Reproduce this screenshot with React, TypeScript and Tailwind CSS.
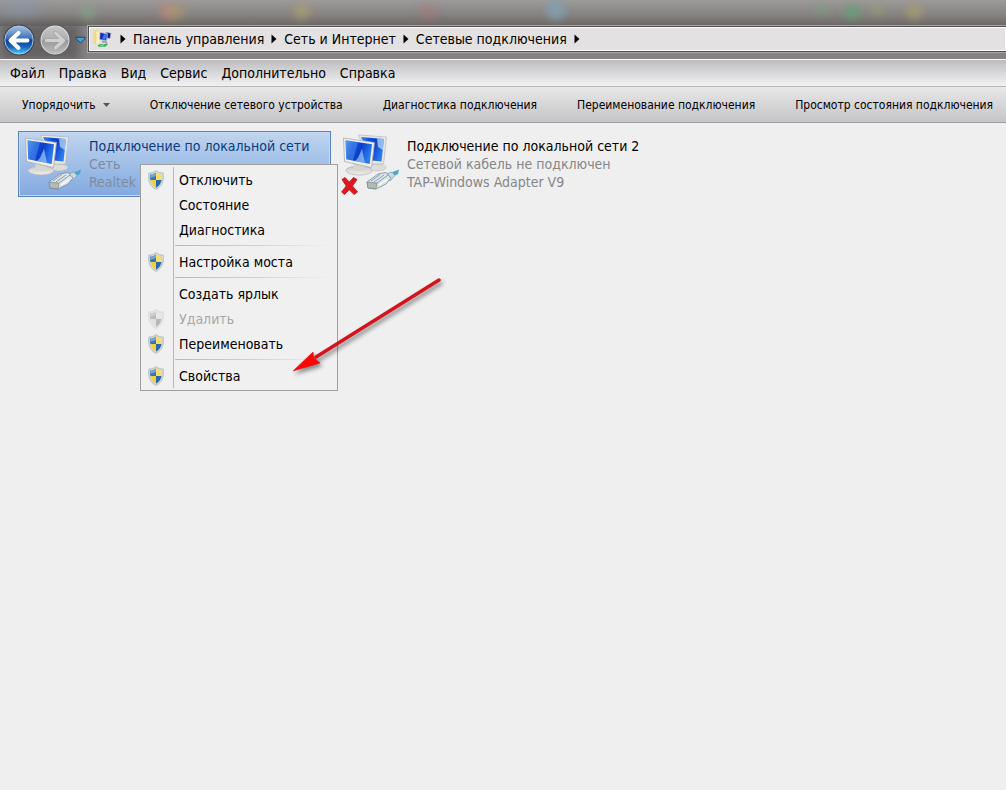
import React from 'react';

const BREADCRUMBS = ['Панель управления', 'Сеть и Интернет', 'Сетевые подключения'];

const MENU_BAR = ['Файл', 'Правка', 'Вид', 'Сервис', 'Дополнительно', 'Справка'];

const COMMANDS = [
  'Отключение сетевого устройства',
  'Диагностика подключения',
  'Переименование подключения',
  'Просмотр состояния подключения',
];

type MenuEntry = { label: string; shield?: boolean; disabled?: boolean };

const CONTEXT_GROUPS: MenuEntry[][] = [
  [{ label: 'Отключить', shield: true }, { label: 'Состояние' }, { label: 'Диагностика' }],
  [{ label: 'Настройка моста', shield: true }],
  [
    { label: 'Создать ярлык' },
    { label: 'Удалить', shield: true, disabled: true },
    { label: 'Переименовать', shield: true },
  ],
  [{ label: 'Свойства', shield: true }],
];

const BackIcon = () => (
  <svg width="32" height="32" viewBox="0 0 34 34" aria-hidden="true">
    <defs>
      <linearGradient id="back" x1="0" y1="0" x2="0" y2="1">
        <stop offset="0" stopColor="#a9c4e6" />
        <stop offset="0.45" stopColor="#3b6db8" />
        <stop offset="0.5" stopColor="#0c3f94" />
        <stop offset="0.75" stopColor="#1668bd" />
        <stop offset="1" stopColor="#4fd0fa" />
      </linearGradient>
    </defs>
    <circle cx="17" cy="17" r="16.5" fill="#3c4656" />
    <circle cx="17" cy="17" r="15" fill="url(#back)" stroke="#b4c8e2" strokeWidth="1" />
    <path
      d="M8 17.5 L16.5 9.5 M8 17.5 L16.5 25.5 M8.5 17.5 H26"
      stroke="#fff"
      strokeWidth="4.2"
      strokeLinejoin="round"
      strokeLinecap="round"
      fill="none"
    />
  </svg>
);

const ForwardIcon = () => (
  <svg width="32" height="32" viewBox="0 0 34 34" aria-hidden="true">
    <defs>
      <linearGradient id="forward" x1="0" y1="0" x2="0" y2="1">
        <stop offset="0" stopColor="#c6c6c6" />
        <stop offset="0.48" stopColor="#b0b0b0" />
        <stop offset="0.52" stopColor="#999999" />
        <stop offset="1" stopColor="#bdbdbd" />
      </linearGradient>
    </defs>
    <circle cx="17" cy="17" r="16.5" fill="#5c5c5c" />
    <circle cx="17" cy="17" r="14.8" fill="url(#forward)" stroke="#d9d9d9" strokeWidth="1.2" />
    <path d="M26 17.5 L17.5 9.5 M26 17.5 L17.5 25.5 M25.5 17.5 H8" stroke="#a0a0a0" strokeWidth="5" strokeLinecap="round" fill="none" />
    <path d="M26 17.5 L17.5 9.5 M26 17.5 L17.5 25.5 M25.5 17.5 H8" stroke="#d0d0d0" strokeWidth="3.4" strokeLinecap="round" fill="none" />
  </svg>
);

const FolderIcon = () => (
  <svg width="20" height="20" viewBox="0 0 20 20" aria-hidden="true" className="shrink-0">
    <path d="M0.5 1.5 L5 0.5 L6 2 V14 L3 15.5 L0.5 14.5 Z" fill="#eed98a" />
    <path d="M3.5 3 L6 2 V14 L3.5 15.5 Z" fill="#fbf3c4" />
    <path d="M7 3.2 L14.5 5 L13.5 12 L6.5 10.5 Z" fill="#1b2bb4" stroke="#c3cede" strokeWidth="0.8" />
    <path d="M11 5 L14 5.6 L12 11 L9 10.5 Z" fill="#3b78ec" />
    <path d="M12.5 3 L18 4.2 L17 9.5 L14 9 L14.5 5 Z" fill="#171f7a" stroke="#aebace" strokeWidth="0.6" />
    <path d="M9 12 L14 12.5 L13.5 14 L9 13.5 Z" fill="#8b94a4" />
    <path d="M4.5 16.5 L7 15 H12 L14.5 14 V16 L12 17.8 H5.5 Z" fill="#3fb05c" />
    <path d="M6.5 16.2 L11 15.6 L10 17 Z" fill="#a9ebb8" />
  </svg>
);

const ShieldIcon = ({ disabled }: { disabled?: boolean }) => (
  <svg width="16" height="20" viewBox="0 0 16 20" aria-hidden="true" className={disabled ? 'opacity-40 grayscale' : ''}>
    <path d="M8 0.5 C6 2.2 3.6 3 0.8 3 C-0.2 10.5 1.8 16.4 8 19.5 C14.2 16.4 16.2 10.5 15.2 3 C12.4 3 10 2.2 8 0.5 Z" fill="#d3d8dd" stroke="#a3abb3" strokeWidth="0.6" />
    <path d="M8 2.4 C6.3 3.7 4.4 4.4 2 4.5 C1.8 6.5 1.9 8.3 2.4 10 H8 Z" fill="#3577b3" />
    <path d="M8 2.4 C9.7 3.7 11.6 4.4 14 4.5 C14.2 6.5 14.1 8.3 13.6 10 H8 Z" fill="#f7de6a" />
    <path d="M2.4 10 H8 V17.8 C4.9 16 3.1 13.3 2.4 10 Z" fill="#f2cd45" />
    <path d="M13.6 10 H8 V17.8 C11.1 16 12.9 13.3 13.6 10 Z" fill="#2a69a8" />
    <path d="M2.4 4.8 C4.8 4.6 6.4 4 8 2.8 V5.5 C6 7 4.4 7.6 2.1 7.6 Z" fill="#fff" opacity="0.35" />
  </svg>
);

const NetworkIcon = ({ id, offline }: { id: string; offline?: boolean }) => (
  <svg width="60" height="64" viewBox="0 0 60 64" aria-hidden="true" className="shrink-0">
    <defs>
      <linearGradient id={id} x1="0" y1="0" x2="1" y2="0.4">
        <stop offset="0" stopColor="#3a8bf0" />
        <stop offset="0.35" stopColor="#0f4fd8" />
        <stop offset="0.6" stopColor="#0a3fca" />
        <stop offset="1" stopColor="#2b7bee" />
      </linearGradient>
      <linearGradient id={`${id}-stand`} x1="0" y1="0" x2="0" y2="1">
        <stop offset="0" stopColor="#c9c9c7" />
        <stop offset="1" stopColor="#efeeec" />
      </linearGradient>
    </defs>
    {/* rear monitor */}
    <ellipse cx="35" cy="35.5" rx="10" ry="3.5" fill="#dcdcda" stroke="#b9bcbf" strokeWidth="0.6" />
    <path d="M17.5 3 L45.5 5 L42.5 32 L30 32 Z" fill="#e9e8e3" stroke="#b4b6b8" strokeWidth="0.7" />
    <path d="M20 5 L43 7 L40.5 29.5 L31 28.5 Z" fill={`url(#${id})`} />
    <path d="M36 6.4 L43 7 L41.8 18 L37 15 Z" fill="#b6d5fa" opacity="0.75" />
    {/* front monitor */}
    <ellipse cx="18" cy="38.5" rx="13" ry="4.5" fill={`url(#${id}-stand)`} stroke="#b0b3b6" strokeWidth="0.7" />
    <path d="M12 30 L23 31.5 L24 39 L13 38.5 Z" fill="#d6d5d1" />
    <path d="M2.5 6 L33.5 10.5 L30.5 35.5 L3.5 29.5 Z" fill="#f1efe8" stroke="#aaadb0" strokeWidth="0.8" />
    <path d="M4.5 8.3 L31 12.2 L28.7 32 L5.3 27.2 Z" fill={`url(#${id})`} />
    <path d="M4.5 8.3 L17 10.2 L12 28.6 L5.3 27.2 Z" fill="#7ab6f8" opacity="0.35" />
    <path d="M17 26 L21 17 L24 31 L14 29 Z" fill="#a9cffb" opacity="0.65" />
    {/* cable plug */}
    <path d="M49 41 L58 37.5 L57 42 L51 45 Z" fill="#4aa7cf" />
    <path d="M45 42 L51 40 L54 43.5 L49 49 Z" fill="#c5dbe7" stroke="#7d97a6" strokeWidth="0.7" />
    <path d="M26 50 L37 42 L45 40.5 L50 46 L45 52 L35 57 L27 56 Z" fill="#dde5ea" stroke="#7b8b96" strokeWidth="0.8" />
    <path d="M26 50 L36 51 L35 57 L27 56 Z" fill="#a9b6bf" stroke="#71828e" strokeWidth="0.6" />
    <path d="M36 51 L47 43 M30 49 L39 42.5 M33 50 L43 43" stroke="#738d9d" strokeWidth="0.8" fill="none" />
    <path d="M28 54.5 L29 51.5 M30.5 55 L31.5 52 M33 55.5 L34 52.5" stroke="#d6c878" strokeWidth="1" />
    <path d="M38 53 L46 47.5" stroke="#fff" strokeWidth="1.5" />
    {offline && (
      <path
        d="M1 47.5 L4 45.5 L8.3 50 L12.5 45.5 L16 47.5 L11.5 54 L16.5 60 L13 62.5 L8.3 57.8 L3.5 62.5 L0.6 60 L5.2 54 Z"
        fill="#dc1920"
        stroke="#b3161c"
        strokeWidth="0.8"
        strokeLinejoin="round"
      />
    )}
  </svg>
);

const Chevron = () => (
  <svg width="6" height="10" viewBox="0 0 6 10" aria-hidden="true" className="shrink-0">
    <path d="M0.5 0.5 L5.5 5 L0.5 9.5 Z" fill="#000" />
  </svg>
);

const TitleBar = () => (
  <header className="relative overflow-hidden h-[59px] pt-6 bg-[#858383]">
    {/* colours of the desktop showing through the glass */}
    <div className="absolute inset-x-0 top-0 h-[26px] bg-linear-to-b from-[#9d9a9a] via-[#898685] to-[#6b6664]">
      <div className="absolute left-0 top-0 w-10 h-4 rounded-full bg-[#8299b0]/60 blur-sm" />
      <div className="absolute left-20 top-1 size-4 rounded-full bg-[#86a884]/60 blur-xs" />
      <div className="absolute left-40 top-1 size-4 rounded-full bg-[#d08a73]/60 blur-xs" />
      <div className="absolute left-[170px] top-1 size-4 rounded-full bg-[#b5a860]/40 blur-xs" />
      <div className="absolute left-[294px] top-1 size-4 rounded-full bg-[#b9ad62]/50 blur-xs" />
      <div className="absolute left-[420px] top-1 size-4 rounded-full bg-[#b96f6f]/40 blur-xs" />
      <div className="absolute left-[546px] top-0 size-5 rounded-full bg-[#7fa3b5]/80 blur-xs" />
      <div className="absolute left-[816px] top-1 size-3 rounded-full bg-[#6da876]/50 blur-xs" />
      <div className="absolute left-[844px] top-1 size-4 rounded-full bg-[#5fa474]/70 blur-xs" />
      <div className="absolute left-[872px] top-1 size-3 rounded-full bg-[#9da862]/50 blur-xs" />
      <div className="absolute left-[906px] top-1 size-4 rounded-full bg-[#b0a562]/60 blur-xs" />
    </div>
    <div className="absolute left-0 top-6 w-20 h-9 bg-[#5c5a5a]/80 blur-xs" />
    <div className="relative flex items-start">
      <div className="flex items-center gap-1 w-[88px] shrink-0 pl-[3px]">
        <button aria-label="Назад"><BackIcon /></button>
        <button aria-label="Вперёд"><ForwardIcon /></button>
        <button aria-label="Последние страницы">
          <svg width="11" height="8" viewBox="0 0 12 8" aria-hidden="true">
            <path d="M1 1 H11 V2.5 L6 7 L1 2.5 Z" fill="#4a9fdc" stroke="#123f66" strokeWidth="1" />
          </svg>
        </button>
      </div>
      <nav className="flex flex-1 items-center gap-[7px] mt-[2px] h-[26px] pl-1 bg-[#e3e1e1] border border-r-0 border-[#4f4d4d] outline outline-[#a9a7a7] shadow-[inset_0_0_0_1px_#fff]">
        <FolderIcon />
        {BREADCRUMBS.map((crumb) => (
          <React.Fragment key={crumb}>
            <Chevron />
            <button className="whitespace-nowrap">{crumb}</button>
          </React.Fragment>
        ))}
        <Chevron />
      </nav>
    </div>
  </header>
);

const ContextMenu = () => (
  <div role="menu" className="absolute left-[140px] top-[41px] z-10 w-[198px] p-[2px] bg-[#f0f0f0] border border-[#a0a0a0]">
    <div className="absolute inset-y-[2px] left-8 w-px bg-[#b9b9b9]" />
    {CONTEXT_GROUPS.map((group, idx) => (
      <React.Fragment key={idx}>
        {idx > 0 && <div role="separator" className="ml-8 mr-1 my-[3px] h-px bg-linear-to-r from-[#b9b9b9] via-[#d0d0d0] to-[#f0f0f0]" />}
        {group.map((entry) => (
          <button key={entry.label} role="menuitem" disabled={entry.disabled} className="flex items-center w-full h-[25px] text-left disabled:text-[#a8a8a8]">
            <span className="w-9 shrink-0 pl-[5px]">{entry.shield && <ShieldIcon disabled={entry.disabled} />}</span>
            {entry.label}
          </button>
        ))}
      </React.Fragment>
    ))}
  </div>
);

const PointerArrow = () => (
  <svg width="156" height="104" viewBox="0 0 156 104" aria-hidden="true" className="absolute left-[288px] top-[152px] z-20 drop-shadow-[2px_3px_2px_rgba(0,0,0,0.45)]">
    <path d="M151 5 L28 82" stroke="#d3141c" strokeWidth="3.4" strokeLinecap="round" />
    <path d="M5 96 L25 77 L26 83 L32 88 Z" fill="#fb0505" stroke="#d8141c" strokeWidth="0.6" />
  </svg>
);

export default function App() {
  return (
    <div className="min-h-screen overflow-x-hidden bg-[#efeff0] text-black text-[14px] leading-[18px] font-['DejaVu_Sans_Condensed','Noto_Sans',sans-serif]">
      <TitleBar />
      <div className="flex items-center gap-[14px] h-[28px] px-[10px] border-t border-b border-t-white border-b-[#b9b8b9] bg-linear-to-b from-[#bfbdc0] to-[#f3f2f3]">
        {MENU_BAR.map((item) => (
          <button key={item}>{item}</button>
        ))}
      </div>
      <div className="flex items-center gap-10 h-9 pl-[22px] border-b border-[#9f9f9f] bg-linear-to-b from-[#e9e8e9] to-[#c5c4c6] text-[12px] whitespace-nowrap">
        <button className="flex items-center gap-[7px]">
          Упорядочить
          <svg width="7" height="4" viewBox="0 0 7 4" aria-hidden="true">
            <path d="M0 0 H7 L3.5 4 Z" fill="#555" />
          </svg>
        </button>
        {COMMANDS.map((command) => (
          <button key={command}>{command}</button>
        ))}
      </div>

      <main className="relative flex gap-[5px] pl-[18px] pt-2">
        <button className="flex gap-[6px] w-[313px] h-[66px] shrink-0 pl-1 text-left border border-[#5b83bd] bg-linear-to-b from-[#c0d5ef] to-[#82a9e0] shadow-[inset_0_0_0_1px_#c3d8f2]">
          <NetworkIcon id="lan" />
          <span className="pt-[5px] whitespace-nowrap text-[#7d8ba0]">
            <span className="block text-[#0a3b7c]">Подключение по локальной сети</span>
            <span className="block">Сеть</span>
            <span className="block">Realtek PCIe</span>
          </span>
        </button>
        <button className="flex gap-[6px] w-[313px] h-[66px] shrink-0 pl-1 text-left border border-transparent">
          <NetworkIcon id="tap" offline />
          <span className="pt-[5px] whitespace-nowrap text-[#868686]">
            <span className="block text-black">Подключение по локальной сети 2</span>
            <span className="block">Сетевой кабель не подключен</span>
            <span className="block">TAP-Windows Adapter V9</span>
          </span>
        </button>
        <ContextMenu />
        <PointerArrow />
      </main>
    </div>
  );
}
